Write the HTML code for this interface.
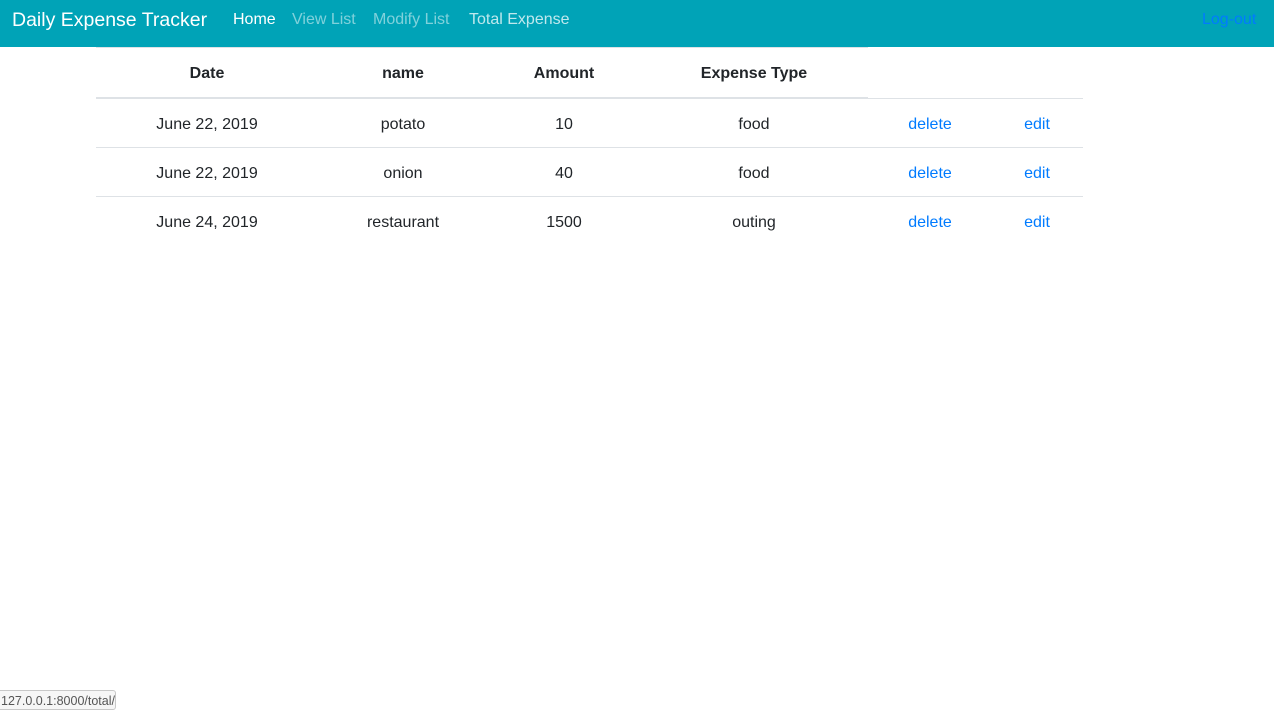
<!DOCTYPE html>
<html><head><style>
body{margin:0;width:1274px;height:706px;position:relative;font-family:"Liberation Sans",Helvetica,Arial,sans-serif;background:#fff;overflow:hidden;color:#212529}
.nav{position:absolute;left:0;top:0;width:1274px;height:47px;background:#00a3b7}
.t{position:absolute;white-space:nowrap;font-size:16px;transform:translateX(-50%)}
.n{position:absolute;top:11px;font-size:16px;white-space:nowrap}
.line{position:absolute;height:1px;background:#dee2e6}
.b{font-weight:bold}
.a{color:#007bff}
</style></head><body>
<div class="nav"></div>
<div class="n" style="left:12px;top:9px;font-size:19.5px;color:#fff">Daily Expense Tracker</div>
<div class="n" style="left:233px;color:#fff">Home</div>
<div class="n" style="left:292px;color:rgba(255,255,255,.5)">View List</div>
<div class="n" style="left:373px;color:rgba(255,255,255,.5)">Modify List</div>
<div class="n" style="left:469px;color:rgba(255,255,255,.75)">Total Expense</div>
<div class="n" style="left:1202px;color:#007bff">Log-out</div>

<div class="line" style="left:96px;top:47px;width:772px"></div>
<div class="line" style="left:96px;top:97px;width:772px;height:2px"></div>
<div class="line" style="left:96px;top:98px;width:987px"></div>
<div class="line" style="left:96px;top:147px;width:987px"></div>
<div class="line" style="left:96px;top:196px;width:987px"></div>

<div class="t b" style="left:207px;top:65px">Date</div>
<div class="t b" style="left:403px;top:65px">name</div>
<div class="t b" style="left:564px;top:65px">Amount</div>
<div class="t b" style="left:754px;top:65px">Expense Type</div>

<div class="t" style="left:207px;top:116px">June 22, 2019</div>
<div class="t" style="left:403px;top:116px">potato</div>
<div class="t" style="left:564px;top:116px">10</div>
<div class="t" style="left:754px;top:116px">food</div>
<div class="t a" style="left:930px;top:116px">delete</div>
<div class="t a" style="left:1037px;top:116px">edit</div>

<div class="t" style="left:207px;top:165px">June 22, 2019</div>
<div class="t" style="left:403px;top:165px">onion</div>
<div class="t" style="left:564px;top:165px">40</div>
<div class="t" style="left:754px;top:165px">food</div>
<div class="t a" style="left:930px;top:165px">delete</div>
<div class="t a" style="left:1037px;top:165px">edit</div>

<div class="t" style="left:207px;top:214px">June 24, 2019</div>
<div class="t" style="left:403px;top:214px">restaurant</div>
<div class="t" style="left:564px;top:214px">1500</div>
<div class="t" style="left:754px;top:214px">outing</div>
<div class="t a" style="left:930px;top:214px">delete</div>
<div class="t a" style="left:1037px;top:214px">edit</div>

<div style="position:absolute;left:-3px;top:690px;width:119px;height:20px;border:1px solid #c8c8c8;border-radius:3px;background:#f6f6f6;font-size:12.5px;color:#555;line-height:20px;padding-left:3px;box-sizing:border-box">127.0.0.1:8000/total/</div>
</body></html>
